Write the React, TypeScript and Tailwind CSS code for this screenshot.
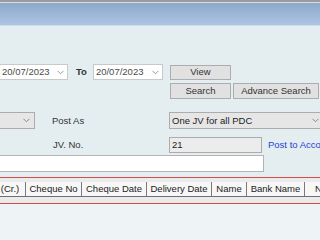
import React from "react";

const Chevron = ({ color = "#9a9a9a" }: { color?: string }) => (
  <svg width="7" height="5" viewBox="0 0 7 5" className="shrink-0">
    <path d="M0.5 0.8 L3.5 3.8 L6.5 0.8" fill="none" stroke={color} strokeWidth="1" />
  </svg>
);

export default function App() {
  const cols: [string, number][] = [
    ["(Cr.)", 31],
    ["Cheque No", 56],
    ["Cheque Date", 65],
    ["Delivery Date", 65],
    ["Name", 35],
    ["Bank Name", 58],
    ["Narration", 60],
  ];
  return (
    <div className="w-[320px] h-[240px] overflow-hidden bg-[#e4eef1] font-['Liberation_Sans',sans-serif] text-[9.5px] text-[#1c1c1c] leading-none">
      <div className="h-[2px] bg-[#9c9c9c]" />
      <div className="h-[1px] bg-[#d4dbe4]" />
      <div className="h-[22px] bg-gradient-to-b from-[#8ea8cb] to-[#adc5e3]" />
      <div className="h-[1px] bg-[#cfdde9]" />

      {/* Row 1 */}
      <div className="mt-[38px] flex items-center h-[16px] overflow-hidden">
        <div className="shrink-0 ml-[-4px] w-[72px] h-[16px] bg-white border border-[#c9c9c9] flex items-center justify-between pl-[5px] pr-[3px] text-[#4a4a4a]">
          <span>20/07/2023</span>
          <Chevron />
        </div>
        <span className="shrink-0 ml-[8px] font-bold text-[#333]">To</span>
        <div className="shrink-0 ml-[6px] w-[70px] h-[16px] bg-white border border-[#c9c9c9] flex items-center justify-between pl-[2px] pr-[3px] text-[#4a4a4a]">
          <span>20/07/2023</span>
          <Chevron />
        </div>
        <div className="shrink-0 ml-[7px] w-[61px] h-[15px] bg-[#e1e1e1] border border-[#adadad] flex items-center justify-center text-[#333]">
          View
        </div>
      </div>

      {/* Row 2 */}
      <div className="mt-[3px] flex items-center h-[16px] overflow-hidden">
        <div className="shrink-0 ml-[170px] w-[61px] h-[16px] bg-[#e1e1e1] border border-[#adadad] flex items-center justify-center text-[#333]">
          Search
        </div>
        <div className="shrink-0 ml-[2px] w-[86px] h-[16px] bg-[#e1e1e1] border border-[#adadad] flex items-center justify-center text-[#333]">
          Advance Search
        </div>
      </div>

      {/* Row 3 */}
      <div className="mt-[13px] flex items-center h-[17px] overflow-hidden">
        <div className="shrink-0 ml-[-4px] w-[39px] h-[17px] bg-[#e6e6e6] border border-[#acacac] flex items-center justify-end pr-[4px]">
          <Chevron color="#888" />
        </div>
        <span className="shrink-0 ml-[17px] w-[117px] text-[#333]">Post As</span>
        <div className="shrink-0 w-[156px] h-[17px] bg-[#e6e6e6] border border-[#acacac] flex items-center justify-between pl-[2px] pr-[5px]">
          <span>One JV for all PDC</span>
          <Chevron color="#888" />
        </div>
      </div>

      {/* Row 4 */}
      <div className="mt-[8px] flex items-center h-[16px] overflow-hidden">
        <span className="shrink-0 ml-[53px] w-[116px] text-[#333]">JV. No.</span>
        <div className="shrink-0 w-[93px] h-[16px] bg-[#ececec] border border-[#ababab] flex items-center pl-[2px]">
          21
        </div>
        <span className="shrink-0 ml-[6px] whitespace-nowrap text-[#1f3fd6]">Post to Accounts</span>
      </div>

      {/* Row 5 */}
      <div className="mt-[2px] flex overflow-hidden">
        <div className="shrink-0 ml-[-4px] w-[268px] h-[17px] bg-white border border-[#b4b4b4]" />
      </div>

      {/* Table header region */}
      <div className="mt-[5px] border-t border-b border-[#d24b4b] bg-[#ebebeb] pt-[4px] pb-[6px] overflow-hidden">
        <div className="flex ml-[-5px] h-[15px] border-b border-[#6f6f6f] whitespace-nowrap">
          {cols.map(([c, w]) => (
            <div
              key={c}
              style={{ width: w }}
              className="shrink-0 h-full bg-[#f7f7f7] border-r border-[#7a7a7a] flex items-center justify-center text-[#222]"
            >
              {c}
            </div>
          ))}
        </div>
      </div>
      <div className="h-[40px] bg-[#eef4f6]" />
    </div>
  );
}
